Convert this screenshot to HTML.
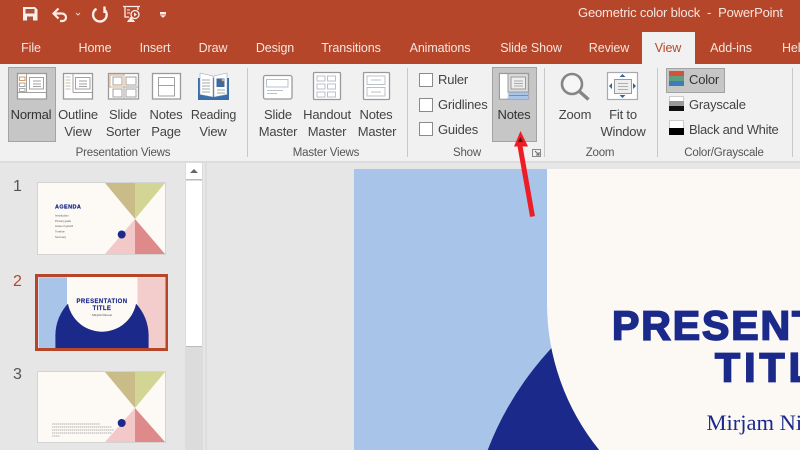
<!DOCTYPE html>
<html><head><meta charset="utf-8"><style>
html,body{margin:0;padding:0;width:800px;height:450px;overflow:hidden;background:#e6e6e6}
body{position:relative;font-family:"Liberation Sans",sans-serif}
.a{position:absolute}
.t{position:absolute;white-space:nowrap;transform:translate(-50%,-50%);font-size:13px;letter-spacing:-.2px;color:#444;line-height:16px}
.l{position:absolute;white-space:nowrap;transform:translateY(-50%);font-size:13px;letter-spacing:-.2px;color:#444;line-height:16px}
.tab{color:#f6e6e0;font-size:12.5px;letter-spacing:-.1px}
.g{font-size:11.5px;color:#555;letter-spacing:-.2px}
.sep{position:absolute;width:1px;top:68px;height:89px;background:#c8c8c8}
.cb{position:absolute;left:419px;width:12px;height:12px;background:#fff;border:1px solid #8a8a8a}
svg{position:absolute;left:0;top:0;overflow:hidden;display:block}
</style></head><body>
<div class="a" style="left:0;top:0;width:800px;height:64px;background:#b5462a"></div>
<div class="a" style="left:642px;top:32px;width:53px;height:33px;background:#f1f1f1"></div>
<div class="a" style="left:0;top:64px;width:800px;height:97px;background:#f1f1f1"></div>
<div class="a" style="left:0;top:161px;width:800px;height:2px;background:#dcdcdc"></div>
<div class="a" style="left:8px;top:67px;width:46px;height:73px;background:#c6c6c6;border:1px solid #a3a3a3"></div>
<div class="a" style="left:492px;top:67px;width:43px;height:73px;background:#c6c6c6;border:1px solid #a3a3a3"></div>
<div class="a" style="left:666px;top:68px;width:57px;height:23px;background:#c6c6c6;border:1px solid #a3a3a3"></div>
<div class="sep" style="left:247px"></div><div class="sep" style="left:407px"></div><div class="sep" style="left:544px"></div><div class="sep" style="left:657px"></div><div class="sep" style="left:792px"></div>

<div class="l" style="left:578px;top:13px;color:#f6e6e0;font-size:13px;letter-spacing:-.17px">Geometric color block&nbsp; -&nbsp; PowerPoint</div>
<div class="t tab" style="left:31px;top:48px">File</div>
<div class="t tab" style="left:95px;top:48px">Home</div>
<div class="t tab" style="left:155px;top:48px">Insert</div>
<div class="t tab" style="left:213px;top:48px">Draw</div>
<div class="t tab" style="left:275px;top:48px">Design</div>
<div class="t tab" style="left:351px;top:48px">Transitions</div>
<div class="t tab" style="left:440px;top:48px">Animations</div>
<div class="t tab" style="left:531px;top:48px">Slide Show</div>
<div class="t tab" style="left:609px;top:48px">Review</div>
<div class="t tab" style="left:668px;top:48px;color:#b5462a">View</div>
<div class="t tab" style="left:731px;top:48px">Add-ins</div>
<div class="l tab" style="left:782px;top:48px">Help</div>

<div class="t" style="left:31px;top:115px;color:#333">Normal</div>
<div class="t" style="left:78px;top:115px">Outline</div><div class="t" style="left:78px;top:132px">View</div>
<div class="t" style="left:123px;top:115px">Slide</div><div class="t" style="left:123px;top:132px">Sorter</div>
<div class="t" style="left:166px;top:115px">Notes</div><div class="t" style="left:166px;top:132px">Page</div>
<div class="t" style="left:213.500px;top:115px;font-size:12.5px">Reading</div><div class="t" style="left:213px;top:132px">View</div>
<div class="t g" style="left:123px;top:153px">Presentation Views</div>
<div class="t" style="left:278px;top:115px">Slide</div><div class="t" style="left:278px;top:132px">Master</div>
<div class="t" style="left:327px;top:115px">Handout</div><div class="t" style="left:327px;top:132px">Master</div>
<div class="t" style="left:376px;top:115px">Notes</div><div class="t" style="left:377px;top:132px">Master</div>
<div class="t g" style="left:326px;top:153px">Master Views</div>
<div class="cb" style="top:73px"></div><div class="cb" style="top:98px"></div><div class="cb" style="top:122px"></div>
<div class="l" style="left:438px;top:80px">Ruler</div>
<div class="l" style="left:438px;top:105px">Gridlines</div>
<div class="l" style="left:438px;top:130px">Guides</div>
<div class="t" style="left:514px;top:115px;color:#333">Notes</div>
<div class="t g" style="left:467px;top:153px">Show</div>
<div class="t" style="left:575px;top:115px">Zoom</div>
<div class="t" style="left:623px;top:115px">Fit to</div><div class="t" style="left:623px;top:132px">Window</div>
<div class="t g" style="left:600px;top:153px">Zoom</div>
<div class="l" style="left:689px;top:80px;color:#333">Color</div>
<div class="l" style="left:689px;top:105px">Grayscale</div>
<div class="l" style="left:689px;top:130px;letter-spacing:-.3px">Black and White</div>
<div class="t g" style="left:724px;top:153px">Color/Grayscale</div>

<div class="a" style="left:185px;top:163px;width:18px;height:287px;background:#dcdcdc"></div>
<div class="a" style="left:186px;top:163px;width:16px;height:16px;background:#fff;border-bottom:1px solid #bbb"></div>
<div class="a" style="left:186px;top:181px;width:16px;height:165px;background:#fff;border-bottom:1px solid #bbb"></div>
<div class="a" style="left:205px;top:163px;width:2px;height:287px;background:#dedede"></div>
<div class="l" style="left:13px;top:187px;font-size:16px;color:#555">1</div>
<div class="l" style="left:13px;top:282px;font-size:16px;color:#b5462a">2</div>
<div class="l" style="left:13px;top:375px;font-size:16px;color:#555">3</div>

<svg width="800" height="450" viewBox="0 0 800 450">
<!-- QAT -->
<path d="M23 7h12l2.500 2.500V20.500H23z" fill="#fbeee9"/><path d="M25.500 9h9v4.500h-9z" fill="#a8533b"/><path d="M27 16.500h6v4h-6z" fill="#a8533b"/>
<g fill="none" stroke="#fbeee9">
<path d="M55 13.500h7a4 4 0 0 1 4 4 3.500 3.500 0 0 1-3.500 3.500H60M58.500 8.500l-5 5 5 5" stroke-width="2.200"/>
<path d="M96.500 8.800a6.800 6.800 0 1 0 7.500 0.500M104.500 6.500v6.500" stroke-width="2.400"/>
<path d="M123 6.500h17M125 7v10h4M138 7v3" stroke-width="1.300"/>
<circle cx="135" cy="14.500" r="4" stroke-width="1.300"/><path d="M127 10h3M127 13h3" stroke-width="1"/>
</g>
<path d="M134 12.500l3 2-3 2z" fill="#fbeee9"/><path d="M127 22h8l-1.500-2.500h-5z" fill="#fbeee9"/><circle cx="131" cy="18.500" r="1.500" fill="#fbeee9"/>
<path d="M76 13l2 2 2-2" fill="none" stroke="#f0cfc5"/>
<path d="M160 12h6v2.500h-6z" fill="#fbeee9"/><path d="M160 15.200h6l-3 2.500z" fill="#fbeee9"/>
<!-- view icons -->
<g fill="#fff" stroke="#9a9a9a" stroke-width="1.300">
<rect x="17.500" y="73.500" width="29" height="25.500"/><rect x="63.500" y="73.500" width="29" height="25.500"/>
<rect x="108.500" y="73.500" width="30" height="25.500"/><rect x="152.500" y="73.500" width="28" height="25.500"/>
<rect x="263.500" y="75.500" width="28.500" height="23.500" rx="2"/><rect x="313.500" y="72.500" width="27" height="27" rx="1"/><rect x="363.500" y="72.500" width="26" height="27" rx="1"/>
</g>
<rect x="499.500" y="73.500" width="29" height="25.500" fill="#dcdcdc" stroke="#9a9a9a" stroke-width="1.300"/>
<rect x="607.500" y="72.500" width="30" height="27" fill="#fff" stroke="#aaa" stroke-width="1.200"/>
<g fill="none" stroke="#a2a2a2" stroke-width="1">
<path d="M26.500 74v18M18 92.500h28M29.500 77.500h14v11.500h-14zM33 81h8M33 84h8M33 86.500h8"/>
<path d="M73 74v18.500M73 92.500h19M75.500 77.500h14.500v11.500H75.500zM79 81h8M79 84h8M79 86.500h8"/>
<path d="M124 74v25M109 87h29M113 77h9v8h-9zM126 77h10v8h-10zM113 89h9v8h-9zM126 89h10v8h-10z"/>
<path d="M158.500 77.500h16v8h-16zM158.500 85.500h16v10.500h-16z"/>
<path d="M317 76h8v5h-8zM327.500 76h8v5h-8zM317 84h8v5h-8zM327.500 84h8v5h-8zM317 92h8v5h-8zM327.500 92h8v5h-8z" stroke="#b8c2c8"/>
<path d="M367 76h18v8.500h-18zM367 87.500h18v8.500h-18zM371 80h10M371 92h10" stroke="#b8c2c8"/>
<path d="M266.500 79.500h21.500v7.500h-21.500zM267 90.500h16M267 93.500h10" stroke="#b8c2c8"/>
<path d="M508 74v18.500M508 92h21" stroke="#9a9a9a"/>
</g>
<path d="M500 74.200h7.500v24.500H500z" fill="#fff"/>
<path d="M511 77h14.500v12H511z" fill="#eee" stroke="#9a9a9a"/><path d="M514 81h9M514 83.500h9M514 86h9" stroke="#aaa"/>
<path d="M508.500 92.500h20v6.500h-20z" fill="#a9c4e9"/><path d="M509 95.500h19" stroke="#6f90bd"/>
<path d="M19.500 77h5.500v3.500h-5.500z" fill="#fff" stroke="#d99a5b"/><path d="M19.500 83h5.500v3.500h-5.500zM19.500 88.500h5.500v3h-5.500z" fill="#fff" stroke="#aaa"/>
<path d="M65.500 77h5M65.500 80h5M65.500 83h5M65.500 86h5M65.500 89h5" stroke="#c9bfa8"/>
<path d="M110 75h14v12h-14z" fill="none" stroke="#e0b080"/>
<!-- reading -->
<path d="M198 78v22h31V78z" fill="#3a6ea8"/><path d="M200 73l13 3v21l-13-2.500zM227 73l-13 3v21l13-2.500z" fill="#fff" stroke="#8a9cb0" stroke-width=".5"/>
<path d="M202 80h8M202 83h8M202 86h8M202 89h8M202 92h8" stroke="#aaa"/><path d="M216.500 78.500h8v8.500h-8z" fill="#3e6aa0"/><circle cx="223" cy="80" r="1.300" fill="#e2b06c"/><path d="M217 90h8M217 93h8" stroke="#aaa"/>
<!-- zoom -->
<circle cx="572" cy="84" r="10" fill="#f6f6f6" stroke="#858585" stroke-width="2.600"/><path d="M579.500 91.500l9 8" stroke="#858585" stroke-width="3.400"/>
<!-- fit -->
<rect x="614.500" y="79.500" width="17" height="14" fill="#eee" stroke="#9a9a9a"/><path d="M618 83.500h10M618 86.500h10M618 89.500h10" stroke="#b0b0b0"/>
<path d="M622.500 74l3 3h-6zM622.500 98l3-3h-6zM609 86l3-3v6zM636 86l-3-3v6z" fill="#35659c"/>
<!-- colour -->
<rect x="669" y="71" width="15" height="5" fill="#d1543a"/><rect x="669" y="76" width="15" height="5" fill="#5f9f80"/><rect x="669" y="81" width="15" height="5" fill="#3f7cbc"/>
<rect x="669.500" y="96.500" width="14" height="14" fill="#fff" stroke="#ccc"/><rect x="669" y="101" width="15" height="5" fill="#9a9a9a"/><rect x="669" y="106" width="15" height="5" fill="#111"/>
<rect x="669.500" y="120.500" width="14" height="14" fill="#fff" stroke="#ccc"/><rect x="669" y="128" width="15" height="7" fill="#000"/>
<!-- launcher -->
<path d="M532.500 149.500h8v7h-8z" fill="none" stroke="#888"/><path d="M535 151l4 4M539 152v3h-3" fill="none" stroke="#666"/>
<!-- scroll arrow -->
<path d="M190 173l4-4 4 4z" fill="#666"/>

<!-- Thumb 1 -->
<rect x="37.500" y="182.500" width="128" height="72" fill="#fdfaf6" stroke="#d4d4d4"/>
<path d="M105 183h30v36z" fill="#c9bc88"/><path d="M135 183h30l-30 36z" fill="#d3d594"/><path d="M105 254l30-35v35z" fill="#f3c8c8"/><path d="M135 219l30 35h-30z" fill="#df8a8a"/>
<circle cx="121.700" cy="234.500" r="4" fill="#1b2a8a"/>
<text x="55" y="208.500" font-family="Liberation Sans" font-weight="bold" font-size="5.500" letter-spacing=".4" fill="#1b2a8a" stroke="#1b2a8a" stroke-width=".2">AGENDA</text>
<g font-family="Liberation Sans" font-size="2.600" fill="#555"><text x="55" y="216.500">Introduction</text><text x="55" y="222">Primary goals</text><text x="55" y="227">Areas of growth</text><text x="55" y="232.500">Timeline</text><text x="55" y="238">Summary</text></g>

<!-- Thumb 2 -->
<rect x="36.500" y="275.500" width="130" height="74" fill="#fdfaf6" stroke="#b5462a" stroke-width="3"/>
<clipPath id="c2"><rect x="38.500" y="277.300" width="127" height="70.700"/></clipPath>
<g clip-path="url(#c2)"><rect x="38" y="277" width="29" height="72" fill="#a9c4e9"/><rect x="137.500" y="277" width="28" height="72" fill="#f3cccc"/>
<circle cx="102" cy="335.500" r="46.600" fill="#1b2a8a"/><rect x="55.400" y="335" width="93.200" height="14" fill="#1b2a8a"/>
<path d="M67.300 277h69.400v20a34.700 34.700 0 0 1-69.400 0z" fill="#fdfaf6"/>
<text x="102" y="303.200" text-anchor="middle" font-family="Liberation Sans" font-weight="bold" font-size="6" letter-spacing=".4" fill="#1b2a8a" stroke="#1b2a8a" stroke-width=".15">PRESENTATION</text>
<text x="102" y="309.800" text-anchor="middle" font-family="Liberation Sans" font-weight="bold" font-size="6" letter-spacing=".4" fill="#1b2a8a" stroke="#1b2a8a" stroke-width=".15">TITLE</text>
<text x="102" y="316" text-anchor="middle" font-family="Liberation Serif" font-size="3.200" fill="#444">Mirjam Nilsson</text></g>

<!-- Thumb 3 -->
<rect x="37.500" y="371.500" width="128" height="71" fill="#fdfaf6" stroke="#d4d4d4"/>
<path d="M105 372h30v36z" fill="#c9bc88"/><path d="M135 372h30l-30 36z" fill="#d3d594"/><path d="M105 442l30-34v34z" fill="#f3c8c8"/><path d="M135 408l30 34h-30z" fill="#df8a8a"/>
<circle cx="121.700" cy="423" r="4" fill="#1b2a8a"/>
<path d="M52 424h48M52 427h60M52 430h62M52 433h60M52 436h8" stroke="#999" stroke-width=".8" stroke-dasharray="1.500 .5"/>

<!-- Main slide -->
<clipPath id="m"><rect x="354" y="169" width="446" height="281"/></clipPath>
<g clip-path="url(#m)">
<rect x="354" y="169" width="446" height="281" fill="#a9c4e9"/>
<path d="M487.700 450A313 313 0 0 1 780 249V450Z" fill="#1b2a8a"/>
<path d="M547 169H800V450H599.200A233 233 0 0 1 547 303Z" fill="#fcf9f5"/>
<text x="612" y="339.500" textLength="336" lengthAdjust="spacing" font-family="Liberation Sans" font-weight="bold" font-size="41" fill="#1b2a8a" stroke="#1b2a8a" stroke-width="1.700">PRESENTATION</text>
<text x="715" y="381.500" textLength="130" lengthAdjust="spacing" font-family="Liberation Sans" font-weight="bold" font-size="41" fill="#1b2a8a" stroke="#1b2a8a" stroke-width="1.700">TITLE</text>
<text x="706.500" y="430" font-family="Liberation Serif" font-size="22.500" fill="#1b2a8a">Mirjam Nilsson</text>
</g>
<!-- arrow -->
<path d="M520 146L532.500 216.500" stroke="#ee1c25" stroke-width="5" fill="none"/>
<path d="M520.500 131L528 146.500 514 146.500z" fill="#ee1c25"/><path d="M520.500 137l-2.500 5h5z" fill="#4a2020"/>
</svg>
</body></html>
